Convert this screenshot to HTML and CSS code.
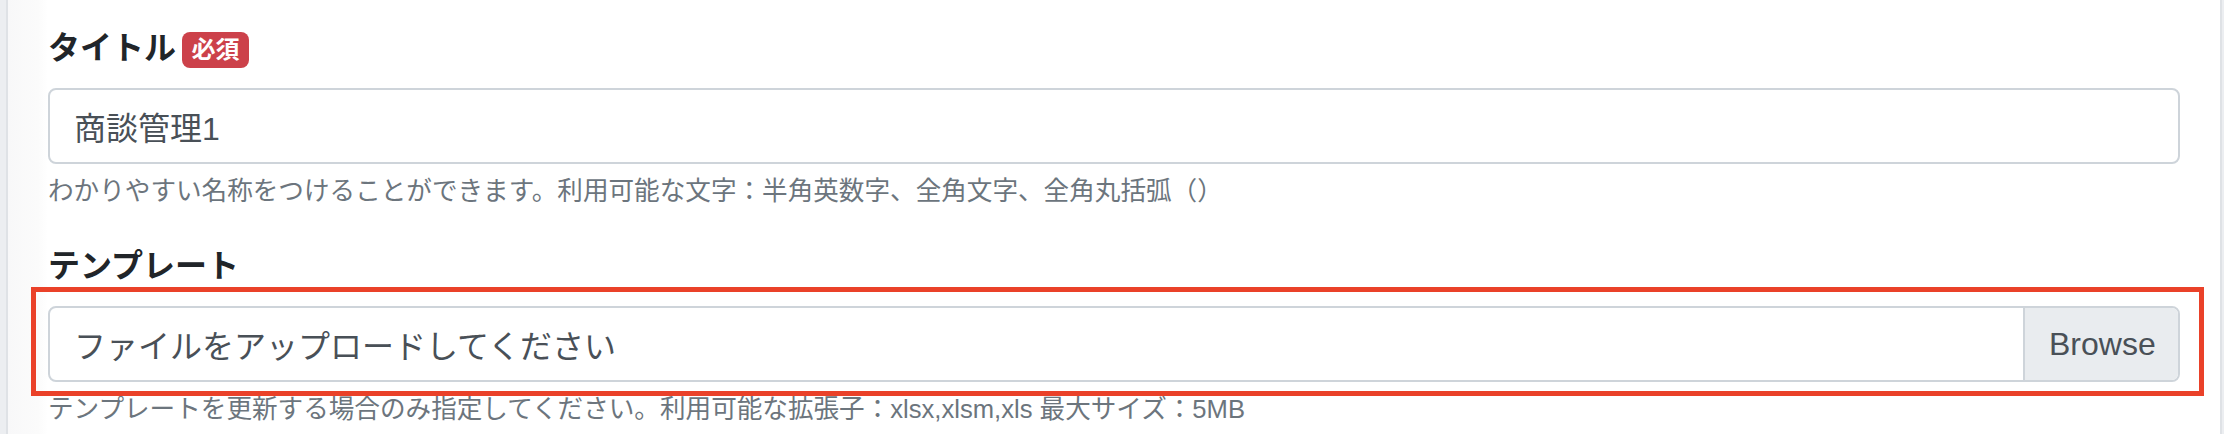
FILE: index.html
```html
<!DOCTYPE html>
<html lang="ja">
<head>
<meta charset="utf-8">
<title>テンプレート設定</title>
<link rel="stylesheet" href="styles.css">
</head>
<body>
<div class="card">
  <div class="form-group">
    <label class="label">タイトル<span class="badge">必須</span></label>
    <div class="form-control">商談管理1</div>
    <small class="help">わかりやすい名称をつけることができます。利用可能な文字：半角英数字、全角文字、全角丸括弧（）</small>
  </div>
  <div class="form-group">
    <label class="label">テンプレート</label>
    <div class="file-wrap">
      <div class="custom-file">
        <span class="file-text">ファイルをアップロードしてください</span>
        <span class="browse">Browse</span>
      </div>
      <div class="annotation"></div>
    </div>
    <small class="help">テンプレートを更新する場合のみ指定してください。利用可能な拡張子：xlsx,xlsm,xls 最大サイズ：5MB</small>
  </div>
</div>
</body>
</html>
```
FILE: styles.css
```css
* { box-sizing: border-box; }
html, body {
  margin: 0;
  padding: 0;
  background: #eceef1;
  height: 434px;
  overflow: hidden;
}
body {
  font-family: "Liberation Sans", "Noto Sans CJK JP", sans-serif;
}
.card {
  margin: 0 2px 0 6px;
  min-height: 434px;
  background: linear-gradient(to right, #f8f8f9 0, #fbfbfb 30px, #ffffff 40px);
  border-left: 2px solid #dfe2e6;
  border-right: 2px solid #dfe2e6;
  padding: 24px 40px 0 40px;
}
.form-group {
  margin-bottom: 32px;
}
.label {
  display: block;
  font-size: 32px;
  line-height: 48px;
  font-weight: 700;
  color: #212529;
  margin-bottom: 16px;
}
.badge {
  display: inline-block;
  margin-left: 6px;
  padding: 6px 9.6px;
  font-size: 24px;
  line-height: 1;
  font-weight: 700;
  color: #ffffff;
  background: #cc414a;
  border-radius: 8px;
  vertical-align: 1px;
}
.form-control {
  display: flex;
  align-items: center;
  height: 76px;
  padding: 0 24px;
  border: 2px solid #ced4da;
  border-radius: 8px;
  background: #ffffff;
  font-size: 32px;
  color: #495057;
}
.help {
  display: block;
  margin-top: 8px;
  font-size: 25.6px;
  line-height: 38.4px;
  color: #6c757d;
}
.file-wrap {
  position: relative;
}
.custom-file {
  display: flex;
  align-items: stretch;
  height: 76px;
  border: 2px solid #ced4da;
  border-radius: 8px;
  background: #ffffff;
  font-size: 32px;
  color: #495057;
  overflow: hidden;
}
.file-text {
  flex: 1;
  display: flex;
  align-items: center;
  padding: 0 24px;
}
.browse {
  display: flex;
  align-items: center;
  width: 155px;
  padding: 0 24px;
  background: #e9ecef;
  border-left: 2px solid #ced4da;
}
.annotation {
  position: absolute;
  top: -19px;
  left: -17px;
  right: -24px;
  bottom: -14px;
  border: 5px solid #ea4129;
  pointer-events: none;
}
```
